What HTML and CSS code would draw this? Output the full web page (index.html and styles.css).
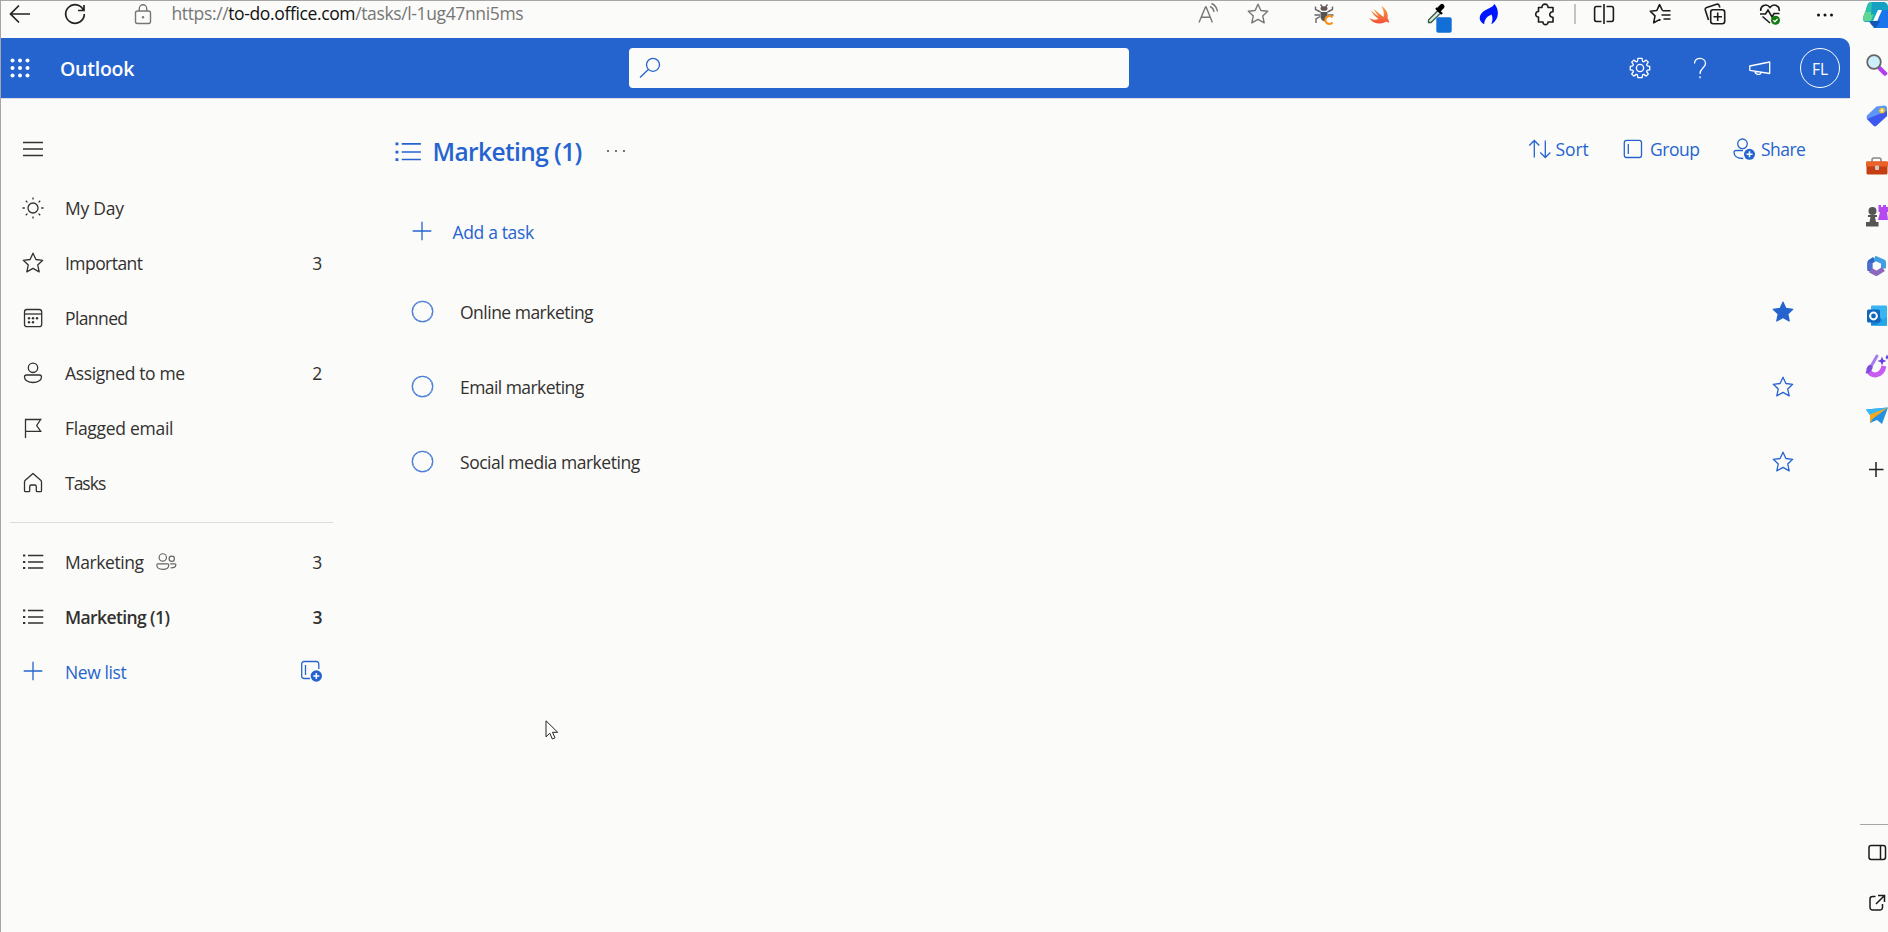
FILE: index.html
```html
<!DOCTYPE html>
<html lang="en">
<head>
<meta charset="utf-8">
<title>Marketing (1) - To Do</title>
<link rel="stylesheet" href="styles.css">
</head>
<body>
<svg class="defs" width="0" height="0">
  <defs>
    <symbol id="star" viewBox="0 0 24 24"><path d="M12 2.200l2.900 6.300 6.800.8-5 4.600 1.500 7L12 17.400l-6.200 3.500 1.500-7-5-4.600 6.800-.8z" stroke-linejoin="round"/></symbol>
    <symbol id="list" viewBox="0 0 24 24"><path d="M7 5.500h15.300M7 12h15.300M7 18h15.300"/><path d="M2 5.500h2.300M2 12h2.300M2 18h2.300" stroke-width="2.200"/></symbol>
    <symbol id="plus" viewBox="0 0 24 24"><path d="M12 2.700v18.600M2.700 12h18.600"/></symbol>
  </defs>
</svg>

<div class="window">
  <div class="page">
    <div class="browser-bar">
      <svg class="bi back" viewBox="0 0 24 24"><path d="M22 12H3M11 3.500L2.500 12l8.500 8.500"/></svg>
      <svg class="bi reload" viewBox="0 0 24 24"><path d="M20.500 8.200A9.300 9.300 0 1 0 21.300 12M21 3v5.500h-6"/></svg>
      <svg class="bi lock" viewBox="0 0 24 24"><rect x="4.500" y="9" width="15" height="12.500" rx="2"/><path d="M8.300 9V6.500a3.700 3.700 0 0 1 7.400 0V9"/><circle cx="12" cy="15.200" r="1.200" fill="#777" stroke="none"/></svg>
      <span class="url">https://<b>to-do.office.com</b>/tasks/l-1ug47nni5ms</span>
      <div class="actions">
        <svg class="bi a-read" viewBox="0 0 24 24"><path d="M3 20.500L9.500 5h.6l6.300 15.500M5.500 15.300h8.500M14 4.500q3.500 1.500 4 5.500M15.500 1.500q5 2 6 8"/></svg>
        <svg class="bi a-star"><use href="#star"/></svg>
        <svg class="bi a-bug" viewBox="0 0 24 24"><g stroke="#666" stroke-width="1.400"><path d="M8.500 2.500l2 2.500M15.500 2.500l-2 2.500M3.500 4.500v3l5 2.500M20.500 4.500v3l-5 2.500M2.500 13H8M16 13h5.500M4 21v-4l4-2.500"/></g><ellipse cx="12" cy="6.500" rx="3.500" ry="2.300" fill="#655" stroke="none"/><path d="M8.500 10h7v4.500l-3 5q-4-1.500-4-5z" fill="#555" stroke="none"/><path d="M20.500 15.500a4 4 0 1 0 0 5" stroke="#f7941d" stroke-width="2.200"/></svg>
        <svg class="bi solid a-swift" viewBox="0 0 24 24"><defs><linearGradient id="sw" x1="0" y1="0" x2="0" y2="1"><stop offset="0" stop-color="#f8a13a"/><stop offset="1" stop-color="#f2503a"/></linearGradient></defs><path d="M14.500 4c5 3.500 7 8 6 12.300 1.500 1.700 1.700 3.700 1.300 5-1.200-1.600-2.600-1.700-3.800-1.100-5.500 2.800-12 1.300-16-4.200 3.800 2.100 7 2.200 9.500 1C8 14.500 5.500 11.500 3.500 8c3 2.700 5.800 5 8.600 6.800C10 12 8 9.500 6.500 6.800c3.300 3 6.500 5.700 10 8.300 1-3.500 0-7.500-2-11.100z" fill="url(#sw)"/></svg>
        <svg class="bi a-pick" viewBox="0 0 24 24"><path d="M4.500 20.500V18L14 8.500l2.700 2.600L7 20.500z" stroke="#345b46" fill="#dce8df" stroke-width="1.300"/><path d="M12 6l6 6" stroke="#000" stroke-width="2.300"/><path d="M15 7.500l3-3" stroke="#000" stroke-width="5" stroke-linecap="round"/><rect x="12.300" y="15.300" width="15.400" height="15.400" rx="2" fill="#136fd8" stroke="none"/></svg>
        <svg class="bi solid a-flame" viewBox="0 0 24 24"><path d="M17.500 2c5 6 4.500 14.500-1.500 19.200l-1.700.8c1.500-3.500 1.500-6.500.2-9.500-4 1.500-7 4.500-7.300 9.700C1 19 1.500 13 7 9c3.500-2.500 8-3 10.500-7z" fill="#0016ff"/></svg>
        <svg class="bi a-puzzle dark" viewBox="0 0 24 24"><path d="M5.500 5.500H9C8.500 1 15.500 1 15 5.500h5v4.300c-4.300-.3-4.300 5.700 0 5.400v4.800h-5c.3 3.500-5.300 3.500-5 0H5.500v-5C1.800 15.300 1.800 9.300 5.500 9.500z" stroke-linejoin="round"/></svg>
        <i class="sep"></i>
        <svg class="bi a-split dark" viewBox="0 0 24 24"><path d="M9.500 4.500h-5A2 2 0 0 0 2.600 6.500v11a2 2 0 0 0 1.900 2h5M14.500 4.500h5a2 2 0 0 1 1.900 2v11a2 2 0 0 1-1.900 2h-5M12 2v20"/></svg>
        <svg class="bi a-fav dark" viewBox="0 0 24 24"><path d="M14.500 8.500L11.500 2.700 8.800 8.500l-6.500.7 4.700 4.700-1.300 6.900 5.800-3.200 1 .6M14.500 8.800h8M13.500 13h9M15.500 17h7" stroke-linejoin="round"/></svg>
        <svg class="bi a-coll dark" viewBox="0 0 24 24"><rect x="7.700" y="7.700" width="14" height="14" rx="2.500"/><path d="M14.700 10.500v8.500M10.500 14.700h8.500M5.500 18L2.300 8a2 2 0 0 1 1.400-2.500l10-3.200a2 2 0 0 1 2.500 1.300l.7 2"/></svg>
        <svg class="bi a-heart dark" viewBox="0 0 24 24"><path d="M2.800 9C2 3.500 8.500.8 12 5.500 15.500.8 22 3.500 21.200 9M2 12h5.500l2.500-4 4 7 2-3.500h5.500M4.500 14.500L12 21" /><circle cx="17.500" cy="18.200" r="4.500" fill="#107c10" stroke="none"/><path d="M15.400 18.300l1.500 1.500 2.700-2.800" stroke="#fff" stroke-width="1.300"/></svg>
        <svg class="bi solid a-more" viewBox="0 0 24 24"><circle cx="5.500" cy="13" r="1.500"/><circle cx="12" cy="13" r="1.500"/><circle cx="18.500" cy="13" r="1.500"/></svg>
      </div>
    </div>

    <header class="suite-bar">
      <svg class="waffle" viewBox="0 0 20 20" fill="#fff"><circle cx="2.500" cy="2.500" r="2"/><circle cx="10" cy="2.500" r="2"/><circle cx="17.500" cy="2.500" r="2"/><circle cx="2.500" cy="10" r="2"/><circle cx="10" cy="10" r="2"/><circle cx="17.500" cy="10" r="2"/><circle cx="2.500" cy="17.500" r="2"/><circle cx="10" cy="17.500" r="2"/><circle cx="17.500" cy="17.500" r="2"/></svg>
      <span class="brand">Outlook</span>
      <div class="search"><svg class="ico" viewBox="0 0 24 24"><circle cx="15" cy="8.800" r="6.500"/><path d="M10.300 13.500L2 21.500"/></svg></div>
      <svg class="ico gear" viewBox="0 0 24 24"><circle cx="12" cy="12" r="3.600"/><path d="M9.900 2.400h4.200l.5 2.900 1.200.5 2.400-1.700 2.100 2.100-1.700 2.400.5 1.200 2.600.5v3.600l-2.600.5-.5 1.200 1.700 2.400-2.100 2.100-2.400-1.700-1.200.5-.5 2.700H9.900l-.5-2.700-1.200-.5-2.400 1.700-2.100-2.100 1.700-2.400-.5-1.200-2.600-.5v-3.600l2.600-.5.5-1.200-1.700-2.400 2.100-2.100 2.400 1.700 1.200-.5z" stroke-linejoin="round"/></svg>
      <svg class="ico help" viewBox="0 0 24 24"><path d="M6.500 7.500C6.500.5 17.500.8 17.500 7.500c0 4.300-5.500 4.500-5.500 10.500M12 20.300v2"/></svg>
      <svg class="ico horn" viewBox="0 0 24 24"><path d="M1.800 10L21.700 6v11.500L1.800 14.300zM7 15.300c0 3.500 5.500 4.300 6 1.300" stroke-linejoin="round"/></svg>
      <span class="avatar">FL</span>
    </header>

    <div class="app">
      <nav class="sidebar">
        <div class="burger"><svg class="ico" viewBox="0 0 24 24"><path d="M2 5.500h20M2 12h20M2 18.500h20"/></svg></div>
        <a class="item"><svg class="ico" viewBox="0 0 24 24"><circle cx="12" cy="12" r="5"/><path d="M12 1.500v2M12 20.500v2M1.500 12h2.300M20.200 12h2.300M4.800 4.800l1.600 1.600M17.600 17.600l1.600 1.600M4.800 19.200l1.600-1.600M17.600 6.400l1.600-1.600"/></svg><span>My Day</span></a>
        <a class="item"><svg class="ico"><use href="#star"/></svg><span class="t2">Important</span><em>3</em></a>
        <a class="item"><svg class="ico" viewBox="0 0 24 24"><rect x="3.500" y="3.500" width="17.200" height="17.200" rx="2.500"/><path d="M3.500 8h17"/><g fill="#333" stroke="none"><circle cx="8" cy="12.300" r="1.200"/><circle cx="12" cy="12.300" r="1.200"/><circle cx="16" cy="12.300" r="1.200"/><circle cx="8" cy="16.300" r="1.200"/><circle cx="12" cy="16.300" r="1.200"/></g></svg><span class="t3">Planned</span></a>
        <a class="item"><svg class="ico" viewBox="0 0 24 24"><circle cx="12" cy="6.800" r="4.700"/><path d="M5.500 14h13q2 0 2 2c0 3.500-4 5.500-8.500 5.500s-8.500-2-8.500-5.500q0-2 2-2z"/></svg><span class="t4">Assigned to me</span><em>2</em></a>
        <a class="item"><svg class="ico" viewBox="0 0 24 24"><path d="M4.500 22V3.500h15.200l-4 6 4 5.800H4.500"/></svg><span class="t5">Flagged email</span></a>
        <a class="item"><svg class="ico" viewBox="0 0 24 24"><path d="M3.500 11q0-1 .8-1.700L12 2.500l7.700 6.800q.8.700.8 1.700v8.700q0 1-1 1h-3.200q-1 0-1-1v-4.200q0-1.500-1.500-1.500h-3.600q-1.500 0-1.500 1.500v4.200q0 1-1 1H4.500q-1 0-1-1z" stroke-linejoin="round"/></svg><span class="t6">Tasks</span></a>
        <hr>
        <a class="item"><svg class="ico"><use href="#list"/></svg><span class="t7">Marketing</span><svg class="ico people" viewBox="0 0 24 24"><circle cx="8.500" cy="7" r="4"/><path d="M3 14h11q1 0 1 1.500c0 3-2.500 4.500-6.500 4.500S2 18.500 2 15.500Q2 14 3 14z"/><circle cx="18.300" cy="8.500" r="2.900"/><path d="M16.500 14h5q1.500 0 1.200 1.500-.5 3.200-5.700 3"/></svg><em>3</em></a>
        <a class="item active"><svg class="ico"><use href="#list"/></svg><span>Marketing (1)</span><em>3</em></a>
        <a class="item new"><svg class="ico"><use href="#plus"/></svg><span>New list</span><svg class="ico group-add" viewBox="0 0 24 24"><path d="M11 19.500H5a2.300 2.300 0 0 1-2.300-2.300V4.800A2.300 2.300 0 0 1 5 2.500h12.500a2.300 2.300 0 0 1 2.300 2.300V10M6.500 6v10"/><circle cx="17.300" cy="17" r="5.700" fill="#2564cf" stroke="none"/><path d="M17.300 14v6M14.300 17h6" stroke="#fff" stroke-width="1.500"/></svg></a>
      </nav>

      <main class="main">
        <div class="list-head">
          <svg class="ico list-icon"><use href="#list"/></svg>
          <h1>Marketing (1)</h1>
          <svg class="ico dots" viewBox="0 0 24 24"><g fill="#555" stroke="none"><circle cx="3.300" cy="12" r="1.200"/><circle cx="12" cy="12" r="1.200"/><circle cx="20.700" cy="12" r="1.200"/></g></svg>
          <div class="tools">
            <svg class="ico" viewBox="0 0 24 24"><path d="M6.300 20.500V3.500M1.300 8.500l5-5 5 5M17.300 3.500v17M12.300 15.500l5 5 5-5"/></svg><span class="sort">Sort</span>
            <svg class="ico" viewBox="0 0 24 24"><rect x="3.300" y="3.300" width="17.200" height="17.200" rx="2.300"/><path d="M7.300 7v10"/></svg><span class="group">Group</span>
            <svg class="ico share-icon" viewBox="0 0 24 24"><circle cx="10.500" cy="6.800" r="4.800"/><path d="M11 13.500H4q-2 0-2 1.800c0 4.300 4 6.200 9.200 6.200"/><circle cx="17.500" cy="17.300" r="5.500" fill="#2564cf" stroke="none"/><path d="M17.500 14.300v6M14.500 17.300h6" stroke="#fff" stroke-width="1.500"/></svg><span class="share">Share</span>
          </div>
        </div>
        <div class="add"><svg class="ico"><use href="#plus"/></svg><span>Add a task</span></div>
        <div class="task"><i class="check"></i><span>Online marketing</span><svg class="ico filled"><use href="#star"/></svg></div>
        <div class="task"><i class="check"></i><span class="em">Email marketing</span><svg class="ico"><use href="#star"/></svg></div>
        <div class="task"><i class="check"></i><span class="so">Social media marketing</span><svg class="ico"><use href="#star"/></svg></div>
      </main>
    </div>
  </div>

  <aside class="rail">
    <svg class="ri copilot" viewBox="0 0 28 28"><path d="M9 1h14l-6 15q-2 5-7 5H4q-4 0-2.500-5L5 5q1-4 4-4z" fill="#18b3b8"/><path d="M2 14L6 5q1-4 5-4h4L9 20H4q-4 0-2.500-5z" fill="#2fc3a8"/><path d="M1.500 15l1.500-4h9L9 20H4q-4 0-2.500-5z" fill="#5fd694"/><path d="M10 1h11q4 0 5 4l1 4h-7L9 14z" fill="#15a0c4"/><path d="M19 9h9v18H11q3-2 4-6z" fill="#1a74ea"/><path d="M7 20h11l-4 7q-4-1-7-7z" fill="#1557b8"/><path d="M16 9h4l-4 9q-1 2-5 2z" fill="#fff"/></svg>
    <svg class="ri" viewBox="0 0 28 28"><path d="M18 16.500l5 5" stroke="#b43df2" stroke-width="4.500" stroke-linecap="round"/><circle cx="12" cy="10" r="6.800" fill="#cdeefb" stroke="#666" stroke-width="1.800"/></svg>
    <svg class="ri" viewBox="0 0 28 28"><path d="M5 13.500L14.500 4.500 22 3.500q3 0 3 3V14L14 24q-1 .5-2 0L5 17q-1-2 0-3.500z" fill="#5f95f6"/><path d="M5 17L25 9v5L14 24q-1 .5-2 0z" fill="#3e57ee"/><circle cx="20" cy="8.500" r="2" fill="#fff" stroke="#f6c528" stroke-width="1.700"/></svg>
    <svg class="ri" viewBox="0 0 28 28"><path d="M10 10V8q0-2 2-2h5q2 0 2 2v2" fill="none" stroke="#888" stroke-width="1.500"/><rect x="4.500" y="9.500" width="21" height="13" rx="1.500" fill="#c43e12"/><path d="M4 9.500h22v5H4z" fill="#e8622a"/><rect x="13" y="13.500" width="4" height="4.500" rx="1" fill="#ccc"/></svg>
    <svg class="ri" viewBox="0 0 28 28"><g fill="#b548ef"><path d="M16.500 3h2.500v2h2V3h3v2h3v5h-2l1 8h-10l2-8h-1.500z"/></g><g fill="#555"><circle cx="10.500" cy="9" r="4"/><path d="M6 13h9v2h-2l1 5h2.500v4.500H4V20h3.500l1-5H6z"/></g></svg>
    <svg class="ri" viewBox="0 0 28 28" fill="none" stroke-width="5" stroke-linejoin="round"><path d="M8 19V10L12.500 7" stroke="#3267c5"/><path d="M12.500 6l9 4v6.500" stroke="#3f9fe6"/><path d="M8 18l6.500 3.500 7-4.500" stroke="#8b68bd"/><path d="M7.700 17.500V10.500" stroke="#4c6fd0"/></svg>
    <svg class="ri" viewBox="0 0 28 28"><rect x="9" y="3.500" width="16" height="20" rx="1" fill="#38b4f0"/><path d="M9 14h8l8 9.500H9z" fill="#1685d9"/><path d="M25 14.500v9H14z" fill="#24a6e8"/><rect x="5" y="7.500" width="13" height="13" rx="1.500" fill="#1267bd"/><circle cx="11.500" cy="14" r="3.400" fill="none" stroke="#fff" stroke-width="2"/></svg>
    <svg class="ri" viewBox="0 0 28 28"><path d="M6.500 18.500q2 4.500 7 4.500 7-1 8.500-9" fill="none" stroke="#c85cf2" stroke-width="5"/><path d="M15 4L9 14.500" stroke="#a77af2" stroke-width="3" stroke-linecap="round"/><path d="M8 12.500q4 1.500 2 5-2.500 4-6.500 4 1-2 1-5 1-3 3.500-4z" fill="#7f50dc"/><path d="M20 4.500l1.300 3.200L24.500 9l-3.200 1.300L20 13.500l-1.300-3.200L15.500 9l3.200-1.300zM25 2.500l1.500 3-1.500 2-1.500-2z" fill="#6744e0"/></svg>
    <svg class="ri" viewBox="0 0 28 28"><path d="M4 7.500L26 5.500l-6 16.500-5-4-7 3v-8z" fill="#2491e4"/><path d="M4 7.500L26 5.500 8.500 13.500z" fill="#35b8f4"/><path d="M8 12.500L26 5.500 11 16.500l-3 4.500z" fill="#f7a91e"/></svg>
    <svg class="ri rail-plus" viewBox="0 0 28 28"><path d="M14 6v15M7 13.500h14.500" stroke="#222" stroke-width="1.500"/></svg>
    <div class="rail-foot">
      <svg class="ri" viewBox="0 0 28 28" fill="none" stroke="#1b1b1b" stroke-width="1.500"><rect x="6" y="6.500" width="16.500" height="14" rx="2.200"/><path d="M17.500 6.500v14"/></svg>
      <svg class="ri" viewBox="0 0 28 28" fill="none" stroke="#1b1b1b" stroke-width="1.500"><path d="M12.500 7.500H9.500a2.500 2.500 0 0 0-2.500 2.500v8.500A2.500 2.500 0 0 0 9.500 21H17a2.500 2.500 0 0 0 2.500-2.500V15M13 15l8.300-8.300M15 6.500h6.500V13"/></svg>
    </div>
  </aside>
</div>

<svg class="cursor" viewBox="0 0 14 20"><path d="M1 .8v16l3.800-3.600 2.500 5.800 2.700-1.200-2.500-5.500h5.200z" fill="#fff" stroke="#222" stroke-width="1"/></svg>
</body>
</html>
```
FILE: styles.css
```css
* { box-sizing: border-box; }

body {
  margin: 0;
  width: 1888px;
  height: 932px;
  overflow: hidden;
  background: #fbfbf9;
  color: #323130;
  font: 17.5px/24px "Open Sans", "Noto Sans", sans-serif;
}

svg { flex: none; overflow: visible; }
.defs { position: absolute; }

.window {
  display: flex;
  height: 932px;
  border-top: 1px solid #a6a6a6;
  border-left: 1px solid #a6a6a6;
}

.page { width: 1849px; flex: none; display: flex; flex-direction: column; }

/* Browser toolbar */
.browser-bar { height: 37px; display: flex; align-items: flex-start; padding-left: 7px; }
.bi { width: 24px; height: 24px; margin-top: 1px; fill: none; stroke: #777; stroke-width: 1.4; }
.back, .reload { stroke: #222; stroke-width: 1.7; }
.reload { margin-left: 31px; }
.lock { margin-left: 44px; }
.dark { stroke: #1b1b1b; stroke-width: 1.6; }
.solid { fill: #111; stroke: none; }
.url { margin-left: 16.5px; letter-spacing: -0.37px; color: #767676; white-space: nowrap; width: 370px; }
.url b { font-weight: 400; color: #111; }
.actions { display: flex; margin-left: 654px; }
.a-star { margin-left: 26px; }
.a-bug { margin-left: 42px; }
.a-swift { margin-left: 31px; }
.a-pick { margin-left: 33px; }
.a-flame { margin-left: 29px; }
.a-puzzle { margin-left: 32px; }
.sep { width: 2px; height: 20px; margin: 3px 16px 0 17px; background: #c4c4c4; }
.a-fav { margin-left: 32px; }
.a-coll, .a-heart, .a-more { margin-left: 31px; }

/* Suite header */
.suite-bar {
  height: 60px;
  flex: none;
  display: flex;
  align-items: center;
  background: #2564cf;
  border-top-right-radius: 10px;
  color: #fff;
}
.ico { width: 24px; height: 24px; fill: none; stroke: currentColor; stroke-width: 1.3; }
.waffle { width: 20px; height: 20px; margin-left: 8.5px; }
.brand { width: 479px; margin-left: 30.5px; padding-top: 1px; font-size: 19.5px; font-weight: 600; letter-spacing: -0.25px; }
.search {
  width: 500px;
  height: 40px;
  margin-left: 90px;
  padding: 8px 9px;
  border-radius: 4px;
  background: #fbfbf9;
  color: #2564cf;
}
.gear { margin-left: 499px; }
.help { margin-left: 36px; }
.horn { margin-left: 36px; }
.avatar {
  width: 40px;
  height: 40px;
  margin-left: 28px;
  border: 1px solid #fff;
  border-radius: 50%;
  font-size: 15.5px;
  line-height: 40px;
  text-align: center;
}

/* Sidebar */
.app { display: flex; flex: 1; border-top: 1px solid #dcdce2; }
.sidebar { width: 332px; padding: 26.5px 0 0 9px; }
.burger { height: 55px; padding: 11px 0 0 10.5px; }
.item { height: 55px; display: flex; align-items: center; padding: 0 11px 0 10.5px; letter-spacing: -0.25px; }
.item > span { margin-left: 20.5px; white-space: nowrap; }
.item em { margin-left: auto; font-style: normal; }
.item > .ico:first-child { margin-top: -1px; }
.item .t2 { letter-spacing: -0.55px; }
.item .t3 { letter-spacing: -0.6px; }
.item .t4 { letter-spacing: -0.36px; }
.item .t5 { letter-spacing: -0.28px; }
.item .t6 { letter-spacing: -1px; }
.item .t7 { letter-spacing: -0.45px; }
.people { width: 22px; height: 22px; margin-left: 11.5px; color: #666; }
.sidebar hr { height: 1px; margin: 11px 0 12px; border: 0; background: #dfdadb; }
.item.active { font-weight: 600; letter-spacing: -0.6px; }
.item.new { color: #2564cf; letter-spacing: -0.4px; }
.new > .ico:first-child { margin-top: -2px; }
.new > .group-add { margin: -2px -0.5px 0 auto; }

/* Task list */
.main { flex: 1; padding: 23px 55.5px 0 62px; color: #2564cf; }
.list-head { height: 60px; display: flex; align-items: center; }
.list-icon { width: 30px; height: 30px; margin-left: -2px; }
h1 { margin: 0 0 0 9.5px; font-size: 24.5px; font-weight: 600; line-height: 30px; letter-spacing: -0.6px; white-space: nowrap; }
.dots { width: 22px; height: 22px; margin: -2px 0 0 23px; }
.tools { display: flex; margin: -6px -20.5px 0 auto; }
.tools span { margin-left: 5px; white-space: nowrap; }
.tools .sort { width: 65.5px; margin-left: 4px; letter-spacing: -0.1px; }
.tools .group { width: 82px; margin-left: 5px; letter-spacing: -0.45px; }
.tools .share { width: 54px; letter-spacing: -0.55px; }
.add { height: 60px; margin-top: 20px; display: flex; align-items: center; padding-left: 15px; }
.add .ico { margin-top: -2px; }
.add span { margin-left: 18.5px; letter-spacing: -0.35px; }
.task { height: 75px; display: flex; align-items: center; padding-left: 17px; }
.task:nth-child(3) { margin-top: 12px; }
.check { width: 21px; height: 21px; border: 1.3px solid #2564cf; border-radius: 50%; box-shadow: 0 0 0 .3px #2564cf; }
.task span { margin-left: 27px; padding-top: 1px; color: #323130; letter-spacing: -0.51px; }
.task .em { letter-spacing: -0.56px; }
.task .so { letter-spacing: -0.47px; }
.task .ico { margin-left: auto; }
.task .filled { fill: #2564cf; }

/* Browser side rail */
.rail { flex: 1; display: flex; flex-direction: column; align-items: flex-start; padding-left: 12px; overflow: hidden; }
.ri { width: 28px; height: 28px; margin-bottom: 22px; }
.copilot { margin-bottom: 23px; }
.rail-plus { margin-top: 4px; }
.rail-foot { margin-top: auto; height: 108px; width: 30px; margin-left: -2.5px; padding: 14px 0 0 3.5px; border-top: 1px solid #a6a6a6; }
.rail-foot .ri { display: block; }

.cursor { position: absolute; left: 545px; top: 720px; width: 14px; height: 20px; }
```
